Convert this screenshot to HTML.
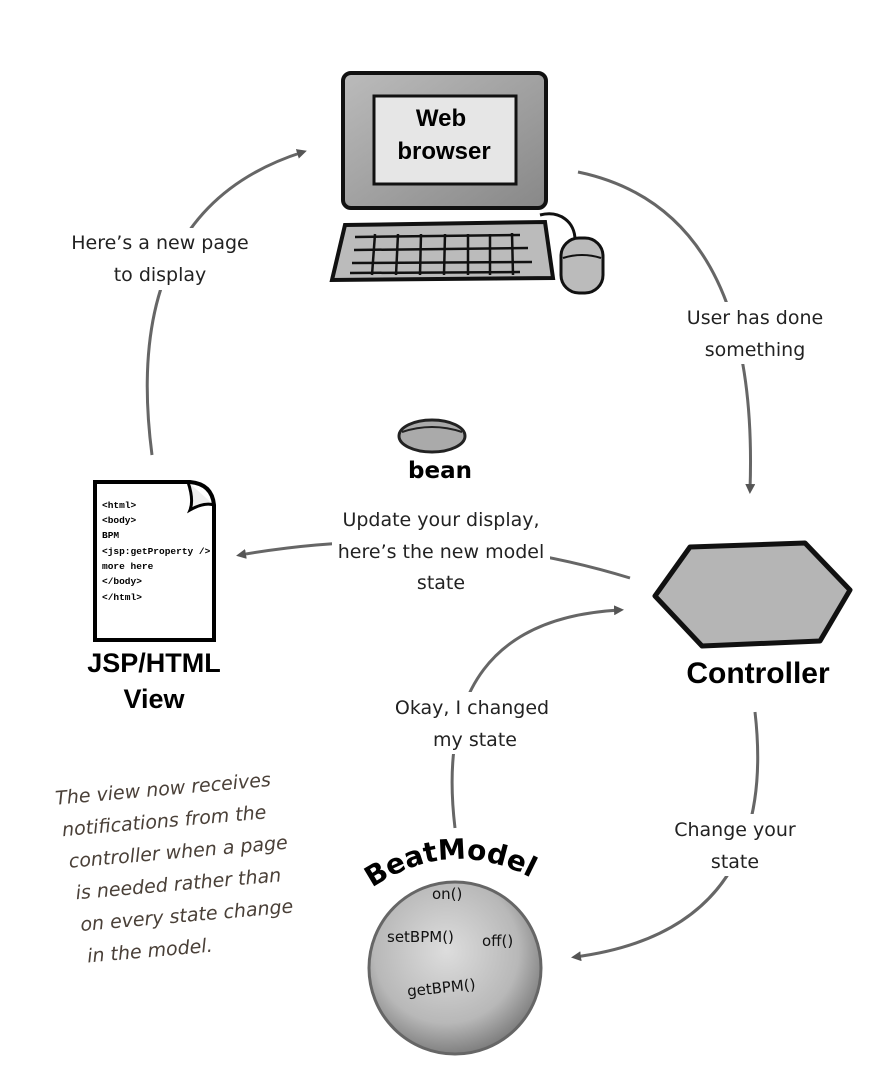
<!DOCTYPE html>
<html><head><meta charset="utf-8"><style>
html,body{margin:0;padding:0;background:#fff;width:880px;height:1078px;overflow:hidden}
svg{display:block}
.h{font-family:"DejaVu Sans","Liberation Sans",sans-serif;font-size:19px;fill:#222}
.b{font-family:"Liberation Sans",sans-serif;font-weight:bold;fill:#000}
.c{font-family:"Liberation Mono",monospace;font-weight:bold;font-size:9.5px;fill:#000}
.n{font-family:"DejaVu Sans",sans-serif;font-style:oblique;font-size:19px;fill:#4a4038}
</style></head><body>
<svg width="880" height="1078" viewBox="0 0 880 1078" xmlns="http://www.w3.org/2000/svg">
<defs>
<marker id="a" markerWidth="10" markerHeight="10" refX="6" refY="5" orient="auto" markerUnits="userSpaceOnUse">
<path d="M0,0 L10,5 L0,10 Z" fill="#555"/></marker>
<radialGradient id="g" cx="45%" cy="40%" r="60%"><stop offset="0" stop-color="#ddd"/><stop offset="0.7" stop-color="#b8b8b8"/><stop offset="1" stop-color="#808080"/></radialGradient>
<linearGradient id="m" x1="0" y1="0" x2="1" y2="1"><stop offset="0" stop-color="#bbb"/><stop offset="1" stop-color="#888"/></linearGradient>
<path id="arc" d="M372,888 Q455,832 542,884"/>
</defs>
<!-- monitor -->
<rect x="343" y="73" width="203" height="135" rx="8" fill="url(#m)" stroke="#111" stroke-width="4"/>
<rect x="374" y="96" width="142" height="88" fill="#e6e6e6" stroke="#111" stroke-width="3"/>
<text class="b" x="441" y="126" font-size="24" text-anchor="middle">Web</text>
<text class="b" x="444" y="159" font-size="24" text-anchor="middle">browser</text>
<!-- keyboard -->
<path d="M345,225 L545,222 L553,278 L332,280 Z" fill="#bbb" stroke="#111" stroke-width="4"/>
<g stroke="#111" stroke-width="2.5" fill="none">
<path d="M355,237 L520,235 M354,250 L528,248 M352,263 L532,262 M350,273 L520,272"/>
<path d="M375,234 L372,275 M398,234 L396,275 M421,234 L420,275 M445,234 L444,275 M468,234 L468,275 M490,234 L490,275 M512,233 L513,275"/>
</g>
<!-- mouse -->
<path d="M540,215 C560,210 575,222 575,240" fill="none" stroke="#111" stroke-width="3"/>
<rect x="561" y="238" width="42" height="55" rx="18" fill="#bbb" stroke="#111" stroke-width="3"/>
<path d="M563,258 Q582,252 601,258" fill="none" stroke="#111" stroke-width="2"/>
<!-- arrows -->
<g fill="none" stroke="#666" stroke-width="3">
<path d="M578,172 Q760,210 750,490" marker-end="url(#a)"/>
<path d="M152,455 Q120,210 303,152" marker-end="url(#a)"/>
<path d="M630,578 Q440,520 240,555" marker-end="url(#a)"/>
<path d="M455,828 Q430,620 620,610" marker-end="url(#a)"/>
<path d="M755,712 Q780,930 575,957" marker-end="url(#a)"/>
</g>
<!-- label backgrounds -->
<g fill="#fff">
<rect x="66" y="228" width="188" height="62"/>
<rect x="680" y="302" width="150" height="62"/>
<rect x="332" y="505" width="218" height="91"/>
<rect x="388" y="692" width="168" height="62"/>
<rect x="670" y="814" width="132" height="62"/>
</g>
<!-- bean -->
<ellipse cx="432" cy="436" rx="33" ry="16" fill="#aaa" stroke="#222" stroke-width="3"/>
<path d="M402,432 Q432,422 462,432" fill="none" stroke="#222" stroke-width="2"/>
<text class="b" x="440" y="478" font-size="23" text-anchor="middle" style="font-family:'DejaVu Sans',sans-serif">bean</text>
<!-- labels -->
<text class="h" x="160" y="249" text-anchor="middle">Here’s a new page</text>
<text class="h" x="160" y="281" text-anchor="middle">to display</text>
<text class="h" x="755" y="324" text-anchor="middle">User has done</text>
<text class="h" x="755" y="356" text-anchor="middle">something</text>
<text class="h" x="441" y="526" text-anchor="middle">Update your display,</text>
<text class="h" x="441" y="558" text-anchor="middle">here’s the new model</text>
<text class="h" x="441" y="589" text-anchor="middle">state</text>
<text class="h" x="472" y="714" text-anchor="middle">Okay, I changed</text>
<text class="h" x="475" y="746" text-anchor="middle">my state</text>
<text class="h" x="735" y="836" text-anchor="middle">Change your</text>
<text class="h" x="735" y="868" text-anchor="middle">state</text>
<!-- document -->
<path d="M95,482 L190,482 Q212,484 214,505 L214,640 L95,640 Z" fill="#fff" stroke="#000" stroke-width="4"/>
<path d="M188,482 Q194,500 190,510 Q204,502 214,505" fill="#eee" stroke="#000" stroke-width="3"/>
<text class="c" x="102" y="508">&lt;html&gt;</text>
<text class="c" x="102" y="523">&lt;body&gt;</text>
<text class="c" x="102" y="538">BPM</text>
<text class="c" x="102" y="554">&lt;jsp:getProperty /&gt;</text>
<text class="c" x="102" y="569">more here</text>
<text class="c" x="102" y="584">&lt;/body&gt;</text>
<text class="c" x="102" y="600">&lt;/html&gt;</text>
<text class="b" x="154" y="672" font-size="27" text-anchor="middle">JSP/HTML</text>
<text class="b" x="154" y="708" font-size="27" text-anchor="middle">View</text>
<!-- controller -->
<path d="M690,547 L805,543 L850,590 L820,641 L702,646 L655,596 Z" fill="#b5b5b5" stroke="#111" stroke-width="5" stroke-linejoin="round"/>
<text class="b" x="758" y="683" font-size="30" text-anchor="middle">Controller</text>
<!-- beatmodel -->
<circle cx="455" cy="968" r="86" fill="url(#g)" stroke="#666" stroke-width="3"/>
<text font-size="28" font-weight="bold" style="font-family:'DejaVu Sans',sans-serif" fill="#000"><textPath href="#arc" textLength="168" lengthAdjust="spacing">BeatModel</textPath></text>
<g font-family="'DejaVu Sans',sans-serif" font-size="15" fill="#111">
<text x="432" y="899">on()</text>
<text x="387" y="942">setBPM()</text>
<text x="482" y="946">off()</text>
<text x="407" y="993" transform="rotate(-6 440 988)">getBPM()</text>
</g>
<!-- note -->
<g transform="rotate(-5 170 870)">
<text class="n" x="62" y="795">The view now receives</text>
<text class="n" x="66" y="827">notifications from the</text>
<text class="n" x="70" y="859">controller when a page</text>
<text class="n" x="74" y="891">is needed rather than</text>
<text class="n" x="76" y="923">on every state change</text>
<text class="n" x="80" y="955">in the model.</text>
</g>
</svg>
</body></html>
